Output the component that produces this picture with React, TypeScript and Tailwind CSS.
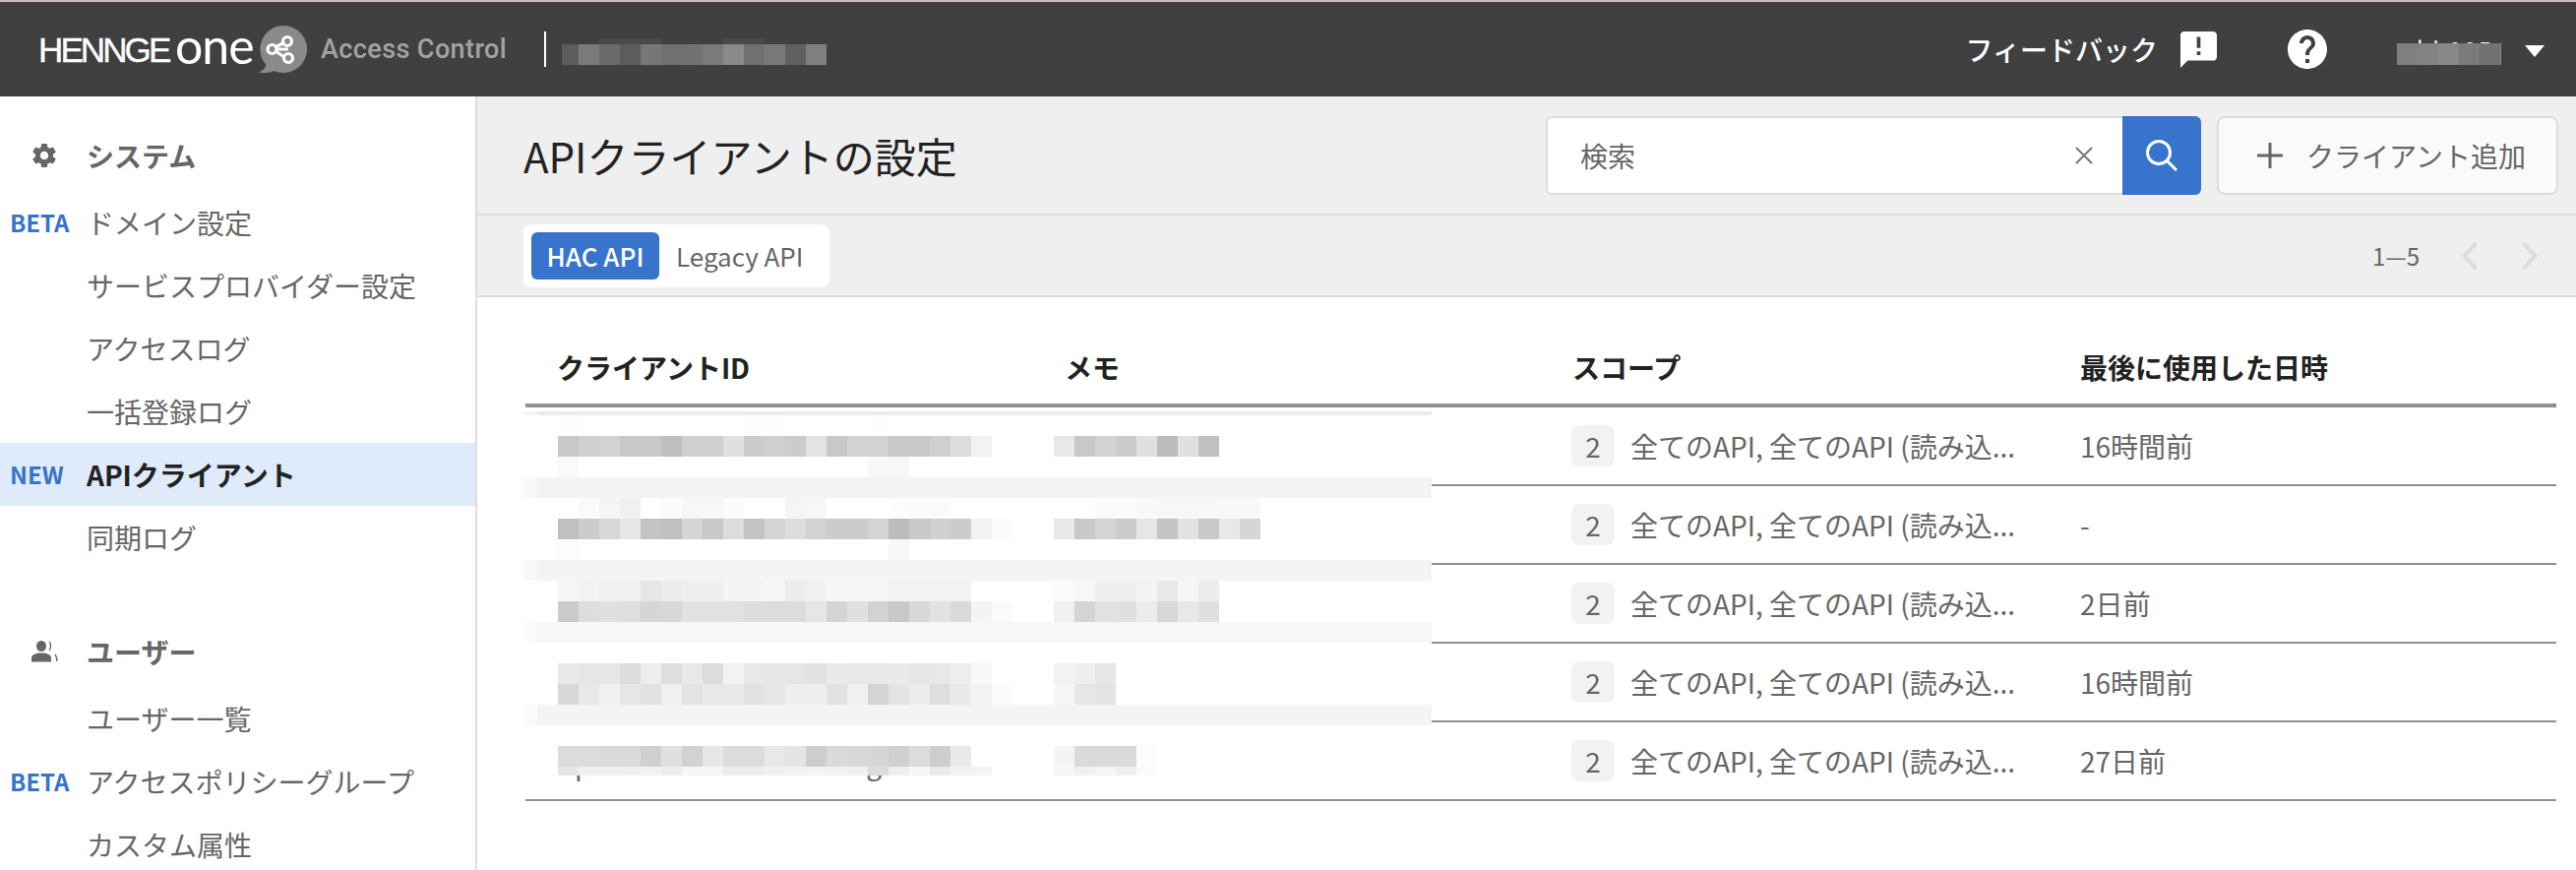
const FONT = "font-['Noto_Sans_CJK_JP','Noto_Sans',sans-serif]"

// mosaic cells: index 0 is the 14px edge cell, then 21px blocks
const toGray = (hex: string) => `#${hex}${hex}${hex}`

function band(level: string, edge: string) {
  return [edge, ...Array(44).fill(level)]
}

function row(id: string, memo = '', memoStart = 26) {
  const cells: string[] = Array(45).fill('ff')
  id.split(' ').filter(Boolean).forEach((v, i) => (cells[i + 2] = v))
  memo.split(' ').filter(Boolean).forEach((v, i) => (cells[i + memoStart] = v))
  return cells
}

const white = () => row('')

const mosaicRows = [
  row('fd ff ff ff ff ff ff ff ff fe fe ff ff ff ff fe'),
  row('c8 d0 d2 c8 c8 bf cf cf e0 cc d0 cc e3 c8 d2 d2 c8 c8 cf dc f2', 'e8 c8 d2 cc e0 bd e0 c0'),
  row('fa ff ff ff ff ff ff ff ff ff ff ff ff ff ff f7 f7'),
  band('f4', 'f9'),
  row('ff fa f5 f0 ff fb f7 f7 fb ff ff f5 f7 ff ff ff fc fb fb', 'fb fb f9 f7 f7 f7 f8 f8', 28),
  row('c0 cc d8 e6 c4 c0 d4 c8 dc c4 d4 dc d2 cc cc d4 bc c8 d0 cc f2 fb', 'e8 c8 d4 cc e6 c4 e2 c8 e8 d6'),
  row('fc ff ff ff ff ff ff ff ff ff ff ff ff ff ff ff f8'),
  band('f4', 'f9'),
  row('f6 f2 f0 f0 e6 ec ee ee f4 f4 f6 ec f0 f6 f6 f6 f2 f2 f2 f2', 'fb f7 ee ee f3 e8 f6 ec'),
  row('cb dd e0 de d6 d8 e2 e2 e2 dc dc dc e6 d4 e0 d2 c8 d8 e2 da f4 fb', 'f0 d4 e2 e0 ec d8 e8 e0'),
  band('f7', 'fb'),
  white(),
  row('ea e6 e6 dd ee de e8 dc f2 e8 e6 e6 e2 ea e8 e8 ea e6 e8 ee f8', 'f2 ee e6'),
  row('d8 e8 f0 e6 e2 f0 e4 e8 e8 e2 e6 ee ee e2 f0 d4 e4 ec de ea f2 fb', 'f6 e6 e4'),
  band('f4', 'fa'),
  white(),
  row('dc dc da da d0 e0 d2 e6 dc dc e8 e4 ce da d8 d6 d0 dc ce ea', 'f4 da da da fc'),
  row('e6 f0 f0 ee f2 ec f6 f6 ec ec f0 f2 f4 f2 f0 dc ee f6 ea f2 f4', 'f6 f0 f5 ee fb'),
]

const orgBlocks = ['5c', '7a', '6a', '5c', '77', '70', '72', '7a', '8a', '70', '78', '60', '80', '6a']
const userBlocks = ['7f', '82', '88', '7a', '72']

const systemItems = [
  { label: 'ドメイン設定', badge: 'BETA' },
  { label: 'サービスプロバイダー設定' },
  { label: 'アクセスログ' },
  { label: '一括登録ログ' },
  { label: 'APIクライアント', badge: 'NEW', active: true },
  { label: '同期ログ' },
]

const userItems = [
  { label: 'ユーザー一覧' },
  { label: 'アクセスポリシーグループ', badge: 'BETA' },
  { label: 'カスタム属性' },
]

const clients = [
  { lastUsed: '16時間前' },
  { lastUsed: '-' },
  { lastUsed: '2日前' },
  { lastUsed: '16時間前' },
  { lastUsed: '27日前', peek: true },
]

function Logo() {
  return (
    <div className="flex items-center">
      <span className="ml-[39px] w-[139px] font-['Liberation_Sans',sans-serif] text-[35px] leading-none tracking-[-2.9px] text-white [-webkit-text-stroke:0.4px_white]">
        HENNGE
      </span>
      <span className="w-[84px] font-['Lato',sans-serif] text-[50px] leading-none tracking-[-1px] text-white -translate-y-[4px]">
        one
      </span>
      <svg viewBox="0 0 52 52" className="h-[52px] w-[52px] -translate-x-[2px]">
        <path d="M28 2a24 24 0 1 1-9.5 46c-3 1.6-8 2.6-16 1.4 4-1.4 7-3.6 8-7.4A24 24 0 0 1 28 2z" fill="#8a8a8a" />
        <g fill="none" stroke="#fff" strokeWidth="3.2">
          <path d="M20 24l9-5M20 28l9 6M21 26h12" />
          <circle cx="16.5" cy="26" r="4.5" />
          <circle cx="32" cy="18" r="4.5" />
          <circle cx="33" cy="35" r="4.5" />
        </g>
      </svg>
    </div>
  )
}

function Header() {
  return (
    <header className="flex h-[96px] items-center bg-[#404040]">
      <Logo />
      <span className="ml-[12px] font-['Roboto',sans-serif] text-[27px] font-medium tracking-[0.4px] text-[#a3a3a3]">
        Access Control
      </span>
      <div className="ml-[38px] h-[36px] w-[2px] bg-white" />
      <div className="relative ml-[16px] h-[27px] self-center translate-y-[2px]">
        <div className="flex h-[6px] pl-[38px]">
          <div className="h-full w-[63px] bg-[#4a4a4a]" />
          <div className="ml-[63px] h-full w-[42px] bg-[#4a4a4a]" />
        </div>
        <div className="flex h-[21px] w-[269px] overflow-hidden">
          {orgBlocks.map((v, i) => (
            <div key={i} className="h-full w-[21px] shrink-0 first:w-[17px]" style={{ background: toGray(v) }} />
          ))}
        </div>
      </div>

      <span className="ml-auto text-[28px] font-medium leading-none text-white">フィードバック</span>
      <svg viewBox="2 2 20 20" className="ml-[23px] h-[37px] w-[37px] fill-white">
        <path d="M20 2H4c-1.1 0-1.99.9-1.99 2L2 22l4-4h14c1.1 0 2-.9 2-2V4c0-1.1-.9-2-2-2zm-7 9h-2V5h2v6zm0 4h-2v-2h2v2z" />
      </svg>
      <svg viewBox="2 2 20 20" className="ml-[72px] h-[40px] w-[40px] fill-white">
        <path d="M12 2C6.48 2 2 6.48 2 12s4.48 10 10 10 10-4.48 10-10S17.52 2 12 2zm1 17h-2v-2h2v2zm2.07-7.75l-.9.92C13.45 12.9 13 13.5 13 15h-2v-.5c0-1.1.45-2.1 1.17-2.83l1.24-1.26c.37-.36.59-.86.59-1.41 0-1.1-.9-2-2-2s-2 .9-2 2H8c0-2.21 1.79-4 4-4s4 1.79 4 4c0 .88-.36 1.68-.93 2.25z" />
      </svg>
      <div className="relative ml-[71px] h-[28px] w-[106px] translate-y-[2px]">
        <span className="absolute left-[20px] top-0 whitespace-nowrap text-[24px] leading-none tracking-[2px] text-white">l i 005</span>
        <div className="absolute bottom-0 left-0 flex h-[22px]">
          {userBlocks.map((v, i) => (
            <div key={i} className="h-full w-[21px] shrink-0" style={{ background: toGray(v) }} />
          ))}
          <div className="h-full w-[1px] bg-[#8a8a8a]" />
        </div>
      </div>
      <svg viewBox="0 0 20 12" className="ml-[24px] mr-[32px] h-[12px] w-[20px] fill-white translate-y-[2px]">
        <path d="M0 0h20L10 12z" />
      </svg>
    </header>
  )
}

function NavItem({ label, badge, active }: { label: string; badge?: string; active?: boolean }) {
  return (
    <div className={`relative flex h-[64px] items-center pl-[88px] text-[28px] ${active ? 'bg-[#dfebfb] font-bold text-[#222]' : 'text-[#666]'}`}>
      {badge && (
        <span className="absolute left-[10px] text-[24px] font-bold text-[#3873cc]">{badge}</span>
      )}
      {label}
    </div>
  )
}

function Sidebar() {
  return (
    <aside className="w-[485px] shrink-0 border-r-2 border-[#ddd] pt-[28px]">
      <div className="mb-[4px] flex h-[64px] items-center pl-[33px] text-[28px] font-bold text-[#666]">
        <svg viewBox="2 2 20 20" className="h-[24px] w-[24px] fill-[#666]">
          <path d="M19.43 12.98c.04-.32.07-.64.07-.98s-.03-.66-.07-.98l2.11-1.65c.19-.15.24-.42.12-.64l-2-3.46c-.12-.22-.39-.3-.61-.22l-2.49 1c-.52-.4-1.08-.73-1.69-.98l-.38-2.65C14.46 2.18 14.25 2 14 2h-4c-.25 0-.46.18-.49.42l-.38 2.65c-.61.25-1.17.59-1.69.98l-2.49-1c-.23-.09-.49 0-.61.22l-2 3.46c-.13.22-.07.49.12.64l2.11 1.65c-.04.32-.07.65-.07.98s.03.66.07.98l-2.11 1.65c-.19.15-.24.42-.12.64l2 3.46c.12.22.39.3.61.22l2.49-1c.52.4 1.08.73 1.69.98l.38 2.65c.03.24.24.42.49.42h4c.25 0 .46-.18.49-.42l.38-2.65c.61-.25 1.17-.59 1.69-.98l2.49 1c.23.09.49 0 .61-.22l2-3.46c.12-.22.07-.49-.12-.64l-2.11-1.65zM12 15.5c-1.93 0-3.5-1.57-3.5-3.5s1.57-3.5 3.5-3.5 3.5 1.57 3.5 3.5-1.57 3.5-3.5 3.5z" />
        </svg>
        <span className="ml-[31px]">システム</span>
      </div>
      {systemItems.map((item) => (
        <NavItem key={item.label} {...item} />
      ))}

      <div className="mb-[4px] mt-[52px] flex h-[64px] items-center pl-[32px] text-[28px] font-bold text-[#666]">
        <svg viewBox="0 0 28 22" className="h-[22px] w-[28px]">
          <ellipse cx="10" cy="5.5" rx="5" ry="5.5" fill="#666" />
          <path d="M0 21.5v-4c0-3 4-5 10-5s10 2 10 5v4z" fill="#666" />
          <path d="M18 1c2 1.5 2 7 0 9M24 14c1.5 2 2 4 2 7" fill="none" stroke="#666" strokeWidth="1.4" />
        </svg>
        <span className="ml-[28px]">ユーザー</span>
      </div>
      {userItems.map((item) => (
        <NavItem key={item.label} {...item} />
      ))}
    </aside>
  )
}

function TitleBar() {
  return (
    <div className="flex h-[121px] items-center border-b-2 border-[#ddd] pl-[47px] pr-[18px] pt-[1px]">
      <h1 className="text-[42px] font-normal leading-none text-[#222]">APIクライアントの設定</h1>
      <div className="ml-auto flex h-[80px] w-[666px]">
        <div className="flex flex-1 items-center rounded-l-[6px] border-2 border-r-0 border-[#ddd] bg-white pl-[33px] pr-[30px]">
          <span className="text-[28px] text-[#666]">検索</span>
          <svg viewBox="0 0 18 18" className="ml-auto h-[18px] w-[18px] stroke-[#777] stroke-2">
            <path d="M1 1l16 16M17 1L1 17" />
          </svg>
        </div>
        <button className="flex w-[80px] items-center justify-center rounded-r-[6px] bg-[#3873cc]">
          <svg viewBox="0 0 34 34" className="h-[34px] w-[34px] fill-none stroke-white stroke-[3]">
            <circle cx="14" cy="14" r="11.5" />
            <path d="M22 22l10 10" />
          </svg>
        </button>
      </div>
      <button className="ml-[16px] flex h-[80px] w-[347px] items-center rounded-[8px] border-2 border-[#ddd] bg-[#fafafa] pl-[39px] text-[28px] text-[#666]">
        <svg viewBox="0 0 26 26" className="h-[26px] w-[26px] stroke-[#666] stroke-[3]">
          <path d="M13 0v26M0 13h26" />
        </svg>
        <span className="ml-[24px]">クライアント追加</span>
      </button>
    </div>
  )
}

function TabBar() {
  return (
    <div className="flex h-[83px] items-center border-b-2 border-[#ddd] pl-[47px] pr-[39px]">
      <div className="flex h-[64px] w-[311px] items-center rounded-[8px] bg-white pl-[8px]">
        <button className="h-[48px] w-[130px] rounded-[6px] bg-[#3873cc] text-[26px] font-medium text-white">HAC API</button>
        <span className="ml-[17px] text-[26px] text-[#666]">Legacy API</span>
      </div>
      <span className="ml-auto -translate-x-[2px] text-[24px] text-[#666]">1—5</span>
      <svg viewBox="0 0 16 28" className="ml-[41px] h-[28px] w-[16px] fill-none stroke-[#ddd] stroke-[4]">
        <path d="M14.5 1L2.5 14l12 13" />
      </svg>
      <svg viewBox="0 0 16 28" className="ml-[45px] h-[28px] w-[16px] fill-none stroke-[#ddd] stroke-[4]">
        <path d="M1.5 1l12 13-12 13" />
      </svg>
    </div>
  )
}

function ClientTable() {
  return (
    <div className="relative ml-[49px] mr-[20px]">
      <div className="grid h-[112px] grid-cols-4 items-center border-b-4 border-[#909090] pt-[34px] text-[28px] font-bold text-[#222]">
        <div className="pl-[32px]">クライアントID</div>
        <div className="pl-[32px]">メモ</div>
        <div className="pl-[32px]">スコープ</div>
        <div className="pl-[32px]">最後に使用した日時</div>
      </div>
      {clients.map((client, i) => (
        <div key={i} className="grid h-[80px] grid-cols-4 items-center border-b-2 border-[#909090] text-[28px] text-[#666]">
          <div className="pl-[50px] pt-[4px]">
            {client.peek && (
              <div className="flex w-[312px] justify-between">
                <span>p</span>
                <span>g</span>
              </div>
            )}
          </div>
          <div />
          <div className="flex items-center pl-[31px]">
            <span className="flex h-[42px] w-[44px] items-center justify-center rounded-[8px] bg-[#f2f2f2]">2</span>
            <span className="ml-[16px] whitespace-nowrap">全てのAPI, 全てのAPI (読み込...</span>
          </div>
          <div className="pl-[32px]">{client.lastUsed}</div>
        </div>
      ))}

      {/* pixelated cover over the ID and memo columns */}
      <div className="absolute -left-[2px] top-[116px] h-[370px] w-[923px] overflow-hidden bg-white">
        <div className="flex h-[4px]">
          <div className="h-full w-[14px] bg-[#f5f5f5]" />
          <div className="h-full flex-1 bg-[#ebebeb]" />
        </div>
        <div className="grid grid-cols-[14px_repeat(44,21px)] auto-rows-[21px]">
          {mosaicRows.flatMap((cells, y) =>
            cells.map((v, x) => <div key={`${y}-${x}`} style={{ background: toGray(v) }} />),
          )}
        </div>
      </div>
    </div>
  )
}

export default function App() {
  return (
    <div className={`flex h-[884px] w-[2618px] flex-col overflow-hidden bg-white ${FONT}`}>
      <div className="h-[2px] bg-[#c9bcb8]" />
      <Header />
      <div className="flex flex-1 overflow-hidden">
        <Sidebar />
        <main className="flex-1">
          <div className="bg-[#efefef]">
            <TitleBar />
            <TabBar />
          </div>
          <ClientTable />
        </main>
      </div>
    </div>
  )
}
